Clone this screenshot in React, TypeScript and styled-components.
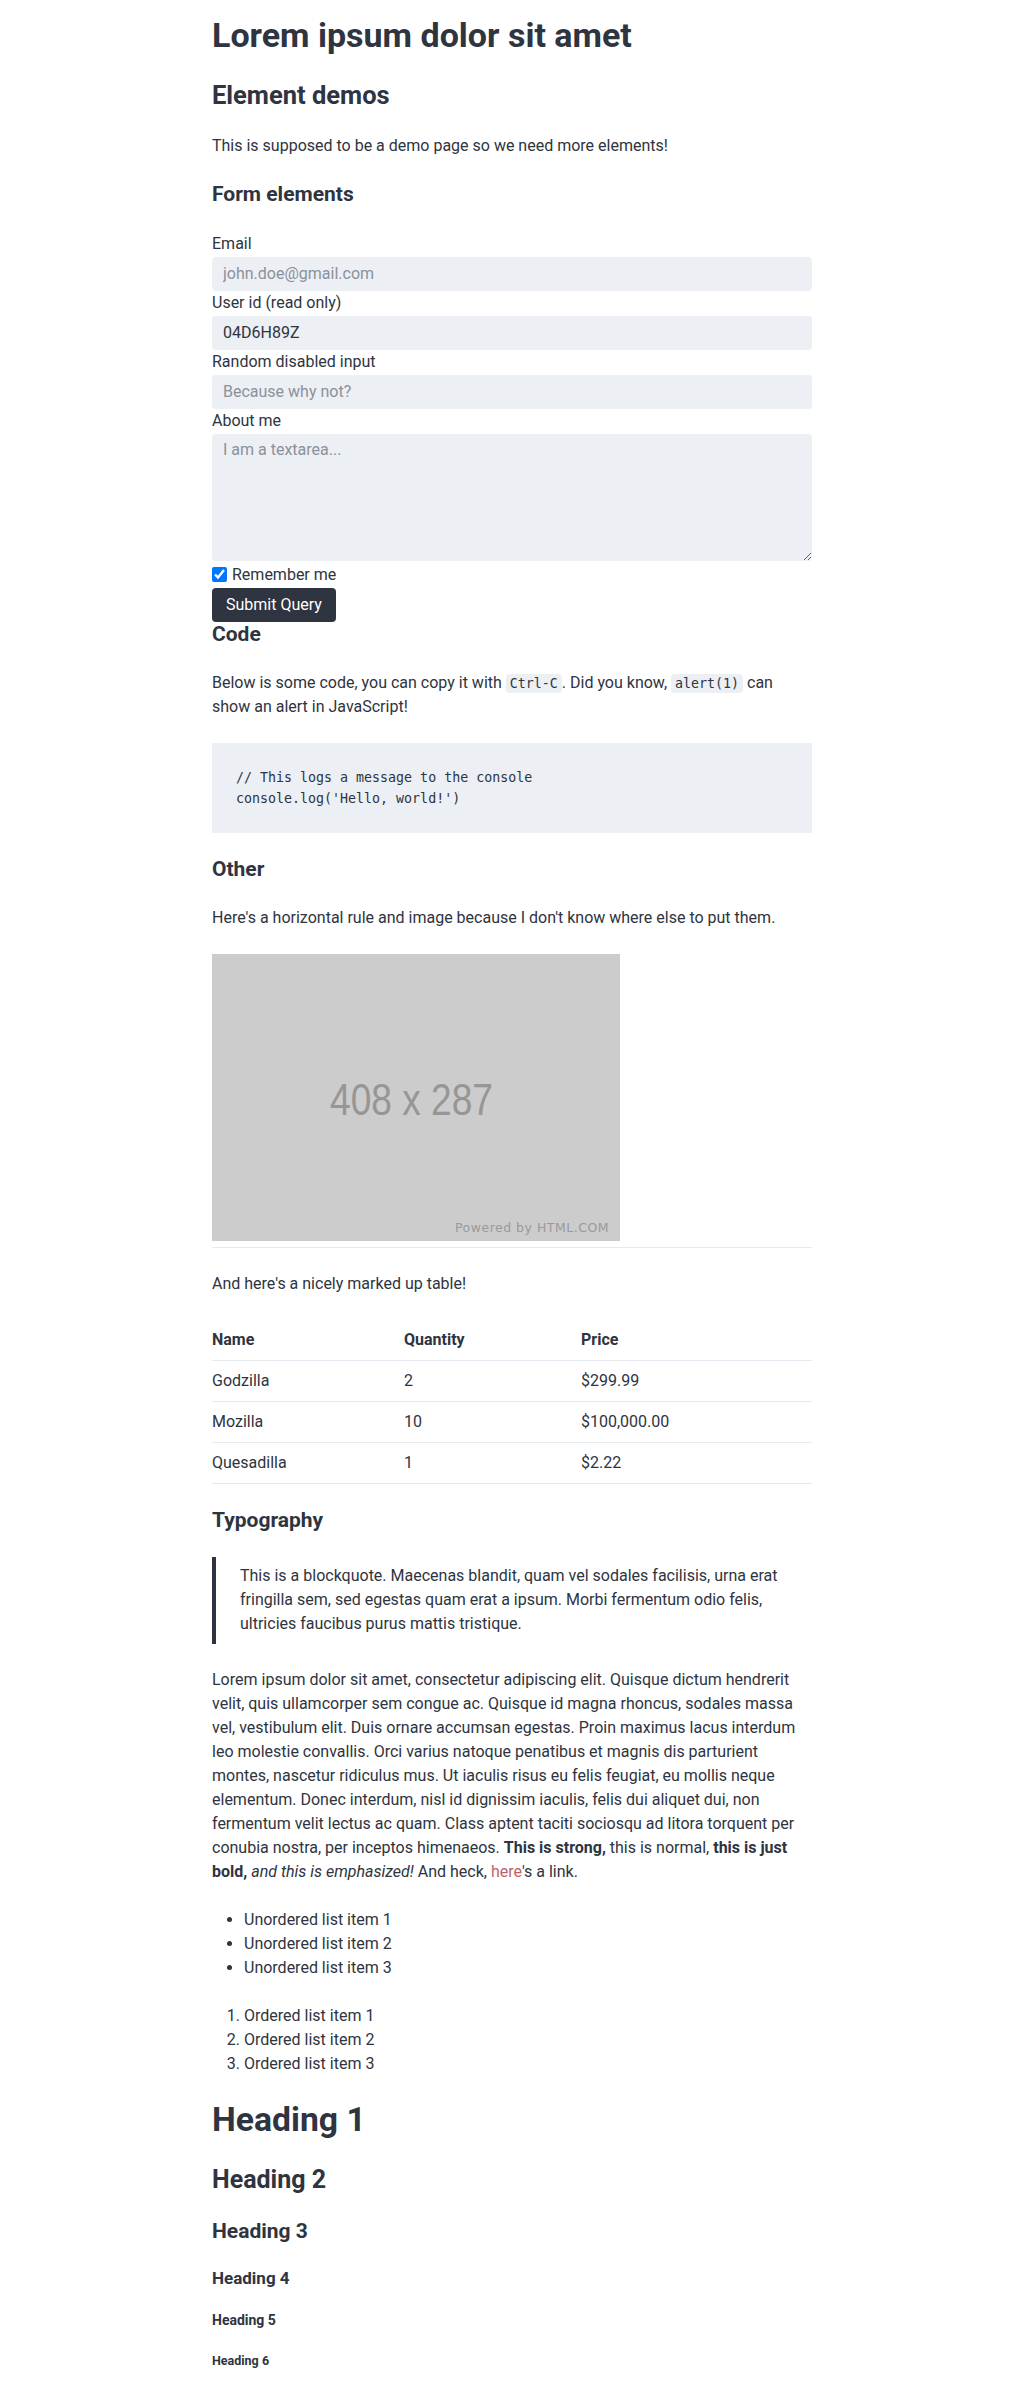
import React from 'react';
import styled, { createGlobalStyle } from 'styled-components';

const GlobalStyle = createGlobalStyle`
  body {
    margin: 0;
    background: #ffffff;
    color: #2e3440;
    font-family: Roboto, "Liberation Sans", sans-serif;
    font-size: 16px;
    line-height: 1.5;
  }
`;

const Page = styled.main`
  max-width: 600px;
  margin: 0 auto;
  padding-top: 15px;
`;

const Heading = styled.h1<{ $size: number }>`
  margin: 0 0 24px;
  font-size: ${(p) => p.$size}px;
  line-height: 1.2;
  font-weight: 700;
`;

const Paragraph = styled.p`
  margin: 0 0 24px;
`;

const Form = styled.form`
  margin: 0;
`;

const Label = styled.label`
  display: block;
  line-height: 24px;
`;

const fieldBase = `
  display: block;
  width: 100%;
  box-sizing: border-box;
  margin: 1px 0 0;
  border: none;
  border-radius: 4px;
  background: #eceff4;
  color: #2e3440;
  font-family: Roboto, "Liberation Sans", sans-serif;
  font-size: 16px;
  outline: none;
  &::placeholder {
    color: #8b919b;
  }
`;

const TextInput = styled.input`
  ${fieldBase}
  height: 34px;
  padding: 0 11px;
`;

const TextArea = styled.textarea`
  ${fieldBase}
  height: 127px;
  margin-bottom: 2px;
  padding: 6px 11px;
  resize: vertical;
`;

const CheckRow = styled.label`
  display: flex;
  align-items: center;
  line-height: 24px;
`;

const Checkbox = styled.input`
  width: 15px;
  height: 15px;
  margin: 0 5px 0 0;
`;

const SubmitButton = styled.button`
  display: block;
  margin-top: 1px;
  padding: 5px 14px;
  border: none;
  border-radius: 4px;
  background: #2e3440;
  color: #ffffff;
  font-family: Roboto, "Liberation Sans", sans-serif;
  font-size: 16px;
  line-height: 24px;
`;

const InlineCode = styled.code`
  padding: 2px 4px;
  border-radius: 4px;
  background: #eceff4;
  font-family: "DejaVu Sans Mono", monospace;
  font-size: 13.3px;
`;

const CodeBlock = styled.pre`
  margin: 0 0 24px;
  padding: 24px;
  background: #eceff4;
  font-family: "DejaVu Sans Mono", monospace;
  font-size: 13.3px;
  line-height: 21px;
`;

const Picture = styled.svg`
  display: block;
  margin-bottom: 6px;
`;

const Rule = styled.hr`
  margin: 0 0 24px;
  border: none;
  border-top: 1px solid #e5e9f0;
`;

const Table = styled.table`
  width: 100%;
  margin: 0 0 24px;
  border-collapse: collapse;
  table-layout: fixed;
`;

const Cell = styled.td<{ $width?: number }>`
  width: ${(p) => (p.$width ? `${p.$width}px` : 'auto')};
  padding: 8px 8px 8px 0;
  border-bottom: 1px solid #e5e9f0;
  text-align: left;
  line-height: 24px;
`;

const HeadCell = styled(Cell).attrs({ as: 'th' })`
  font-weight: 700;
`;

const Quote = styled.blockquote`
  margin: 0 0 24px;
  padding: 7px 0 8px 24px;
  border-left: 4px solid #2e3440;
`;

const Link = styled.a`
  color: #bf616a;
  text-decoration: none;
`;

const List = styled.ul`
  margin: 0 0 24px;
  padding-left: 32px;
`;

const products = [
  { name: 'Godzilla', qty: '2', price: '$299.99' },
  { name: 'Mozilla', qty: '10', price: '$100,000.00' },
  { name: 'Quesadilla', qty: '1', price: '$2.22' },
];

const headings: [string, number][] = [
  ['h1', 33.7],
  ['h2', 25],
  ['h3', 21],
  ['h4', 17],
  ['h5', 14],
  ['h6', 12.5],
];

export default function App() {
  return (
    <>
      <GlobalStyle />
      <Page>
        <Heading $size={34}>Lorem ipsum dolor sit amet</Heading>
        <Heading as="h2" $size={25.5}>Element demos</Heading>
        <Paragraph>This is supposed to be a demo page so we need more elements!</Paragraph>

        <Heading as="h3" $size={21}>Form elements</Heading>
        <Form onSubmit={(e) => e.preventDefault()}>
          <Label htmlFor="email">Email</Label>
          <TextInput id="email" type="email" placeholder="john.doe@gmail.com" />
          <Label htmlFor="uid">User id (read only)</Label>
          <TextInput id="uid" readOnly defaultValue="04D6H89Z" />
          <Label htmlFor="rnd">Random disabled input</Label>
          <TextInput id="rnd" disabled placeholder="Because why not?" />
          <Label htmlFor="about">About me</Label>
          <TextArea id="about" placeholder="I am a textarea..." />
          <CheckRow>
            <Checkbox type="checkbox" defaultChecked />
            Remember me
          </CheckRow>
          <SubmitButton type="submit">Submit Query</SubmitButton>
        </Form>

        <Heading as="h3" $size={21}>Code</Heading>
        <Paragraph>
          Below is some code, you can copy it with <InlineCode>Ctrl-C</InlineCode>. Did you know,{' '}
          <InlineCode>alert(1)</InlineCode> can show an alert in JavaScript!
        </Paragraph>
        <CodeBlock>
          {`// This logs a message to the console
console.log('Hello, world!')`}
        </CodeBlock>

        <Heading as="h3" $size={21}>Other</Heading>
        <Paragraph>Here's a horizontal rule and image because I don't know where else to put them.</Paragraph>
        <Picture width="408" height="287" viewBox="0 0 408 287">
          <rect width="408" height="287" fill="#cccccc" />
          <g transform="translate(118 161) scale(0.834 1)">
            <text fill="#969696" fontFamily="Liberation Sans, sans-serif" fontSize="44.5">
              408 x 287
            </text>
          </g>
          <text
            x="243"
            y="278"
            fill="#9a9a9a"
            fontFamily="DejaVu Sans, sans-serif"
            fontSize="12.5"
            letterSpacing="0.5"
          >
            Powered by HTML.COM
          </text>
        </Picture>
        <Rule />
        <Paragraph>And here's a nicely marked up table!</Paragraph>
        <Table>
          <thead>
            <tr>
              <HeadCell $width={184}>Name</HeadCell>
              <HeadCell $width={169}>Quantity</HeadCell>
              <HeadCell>Price</HeadCell>
            </tr>
          </thead>
          <tbody>
            {products.map((p) => (
              <tr key={p.name}>
                <Cell>{p.name}</Cell>
                <Cell>{p.qty}</Cell>
                <Cell>{p.price}</Cell>
              </tr>
            ))}
          </tbody>
        </Table>

        <Heading as="h3" $size={21}>Typography</Heading>
        <Quote>
          This is a blockquote. Maecenas blandit, quam vel sodales facilisis, urna erat fringilla sem, sed
          egestas quam erat a ipsum. Morbi fermentum odio felis, ultricies faucibus purus mattis tristique.
        </Quote>
        <Paragraph>
          Lorem ipsum dolor sit amet, consectetur adipiscing elit. Quisque dictum hendrerit velit, quis
          ullamcorper sem congue ac. Quisque id magna rhoncus, sodales massa vel, vestibulum elit. Duis ornare
          accumsan egestas. Proin maximus lacus interdum leo molestie convallis. Orci varius natoque penatibus
          et magnis dis parturient montes, nascetur ridiculus mus. Ut iaculis risus eu felis feugiat, eu mollis
          neque elementum. Donec interdum, nisl id dignissim iaculis, felis dui aliquet dui, non fermentum velit
          lectus ac quam. Class aptent taciti sociosqu ad litora torquent per conubia nostra, per inceptos
          himenaeos. <strong>This is strong,</strong> this is normal, <b>this is just bold,</b>{' '}
          <em>and this is emphasized!</em> And heck, <Link href="#">here</Link>'s a link.
        </Paragraph>
        <List>
          <li>Unordered list item 1</li>
          <li>Unordered list item 2</li>
          <li>Unordered list item 3</li>
        </List>
        <List as="ol">
          <li>Ordered list item 1</li>
          <li>Ordered list item 2</li>
          <li>Ordered list item 3</li>
        </List>

        {headings.map(([tag, size], i) => (
          <Heading key={tag} as={tag as 'h1'} $size={size}>
            Heading {i + 1}
          </Heading>
        ))}
      </Page>
    </>
  );
}
